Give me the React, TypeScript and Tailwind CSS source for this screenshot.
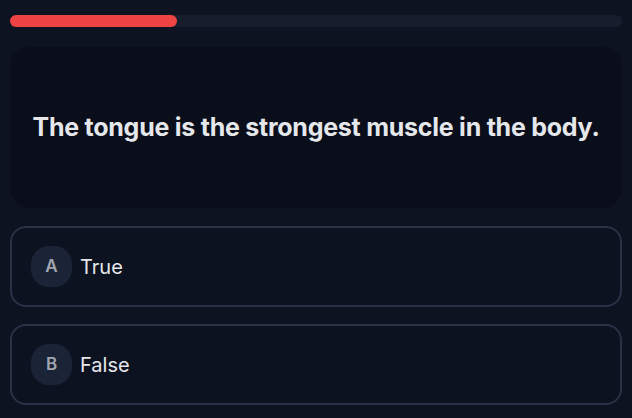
const options = [
  { key: 'A', label: 'True' },
  { key: 'B', label: 'False' },
];

const App = () => {
  const progress = 27.3;

  return (
    <div
      className="min-h-screen w-full bg-[#0e1321] px-[10px] pt-[15px] pb-[14px]"
      style={{ fontFamily: 'Inter, "Noto Sans", sans-serif' }}
    >
      <div className="h-[12px] w-full rounded-full bg-[#171d2d]">
        <div
          className="h-full rounded-full bg-[#ef4444]"
          style={{ width: `${progress}%` }}
        />
      </div>

      <div className="mt-[20px] flex h-[161px] items-center justify-center rounded-[20px] bg-[#0a0e1b] px-4">
        <h1 className="text-[25px] font-bold tracking-[-0.01em] text-[#e5e7eb]">
          The tongue is the strongest muscle in the body.
        </h1>
      </div>

      <div className="mt-[18px] flex flex-col gap-[17px]">
        {options.map((option) => (
          <button
            key={option.key}
            className="flex h-[81px] w-full items-center gap-[8px] rounded-[16px] border-2 border-[#283247] bg-[#0d1220] px-[19px] text-left"
          >
            <span className="flex h-[41px] w-[41px] items-center justify-center rounded-[18px] bg-[#1b2436] text-[17px] font-semibold text-[#a1a6b0]">
              {option.key}
            </span>
            <span className="text-[20px] text-[#e5e7eb]">{option.label}</span>
          </button>
        ))}
      </div>
    </div>
  );
};

export default App;
